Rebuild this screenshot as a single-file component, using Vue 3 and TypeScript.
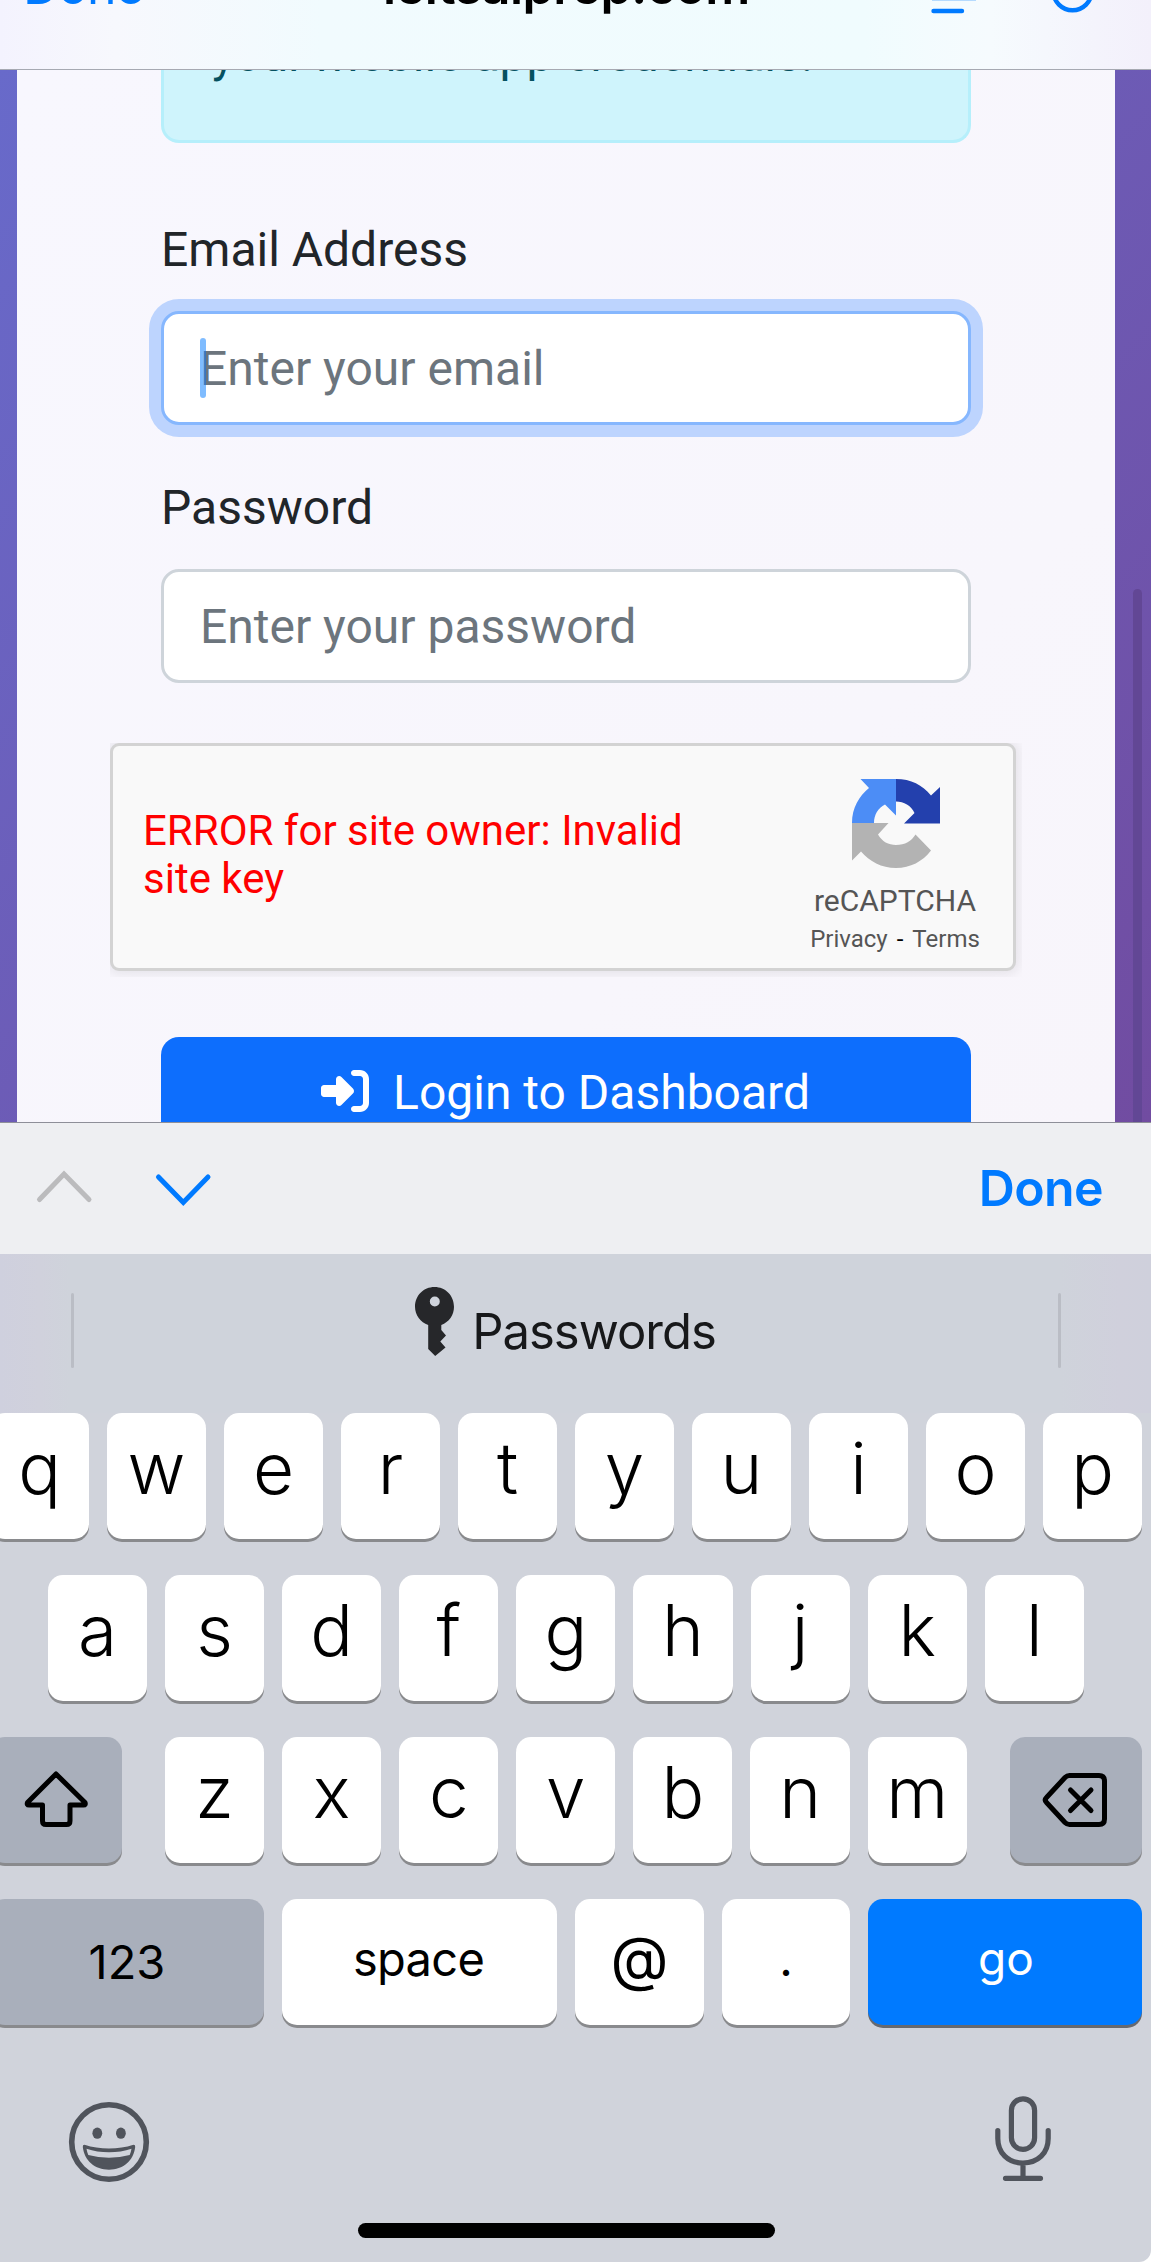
<script setup lang="ts">
interface Key {
  label: string
  kind?: string
}

const rowOne: Key[] = 'qwertyuiop'.split('').map((label) => ({ label }))
const rowTwo: Key[] = 'asdfghjkl'.split('').map((label) => ({ label }))
const rowThree: Key[] = 'zxcvbnm'.split('').map((label) => ({ label }))
const rowFour: Key[] = [
  { label: '123', kind: 'numbers' },
  { label: 'space', kind: 'space' },
  { label: '@', kind: 'at' },
  { label: '.', kind: 'dot' },
  { label: 'go', kind: 'go' },
]
</script>

<template>
  <div class="screen">
    <header class="browser-bar">
      <span class="bar-done">Done</span>
      <span class="bar-title">ieltsaiprep.com</span>
      <svg class="bar-icons" width="170" height="20" viewBox="0 0 170 20">
        <path d="M7 0.2H51" stroke="#007aff" stroke-opacity=".35" stroke-width="1.2" />
        <path d="M8.500 11H37" stroke="#007aff" stroke-width="4.400" stroke-linecap="round" />
        <circle cx="147.500" cy="-9" r="19.200" fill="none" stroke="#007aff" stroke-width="4.400" />
      </svg>
    </header>

    <main class="page">
      <div class="card">
        <div class="alert"><p>your mobile app credentials.</p></div>
        <label class="field-label">Email Address</label>
        <div class="field focused">Enter your email<i class="caret"></i></div>
        <label class="field-label">Password</label>
        <div class="field">Enter your password</div>

        <div class="captcha-frame">
          <div class="captcha">
            <p class="captcha-error">ERROR for site owner: Invalid site key</p>
            <div class="captcha-brand">
              <svg class="captcha-logo" width="92" height="94" viewBox="0 0 92 94">
                <path d="M46 2H10.500L19 11C9 19 2 31 2 46H24C24 38 28 31 35 27.500L46 38.500Z" fill="#4c8df6" />
                <path d="M46 2C61 2 72.500 8 81 18.500L90 10V46.500H54L64.500 36C61 28.500 54 24.500 46 24.500Z" fill="#2340ad" />
                <path d="M2 46H38.500L28 57.500C32 64.500 38.500 68 46 68C55 68 61.500 64 65.500 57.500L81 73.500C72.500 84.500 60.500 91 46 91C31.500 91 19.500 84.500 11 74.500L2 83.500Z" fill="#b3b3b3" />
              </svg>
              <span class="captcha-name">reCAPTCHA</span>
              <span class="captcha-links"><a>Privacy</a><b>-</b><a>Terms</a></span>
            </div>
          </div>
        </div>

        <div class="login">
          <svg width="48" height="48" viewBox="0 0 512 512" fill="#fff">
            <path d="M217.900 105.900L340.700 228.700c7.200 7.200 11.300 17.100 11.300 27.300s-4.100 20.100-11.300 27.300L217.900 406.100c-6.400 6.400-15 9.900-24 9.900c-18.700 0-33.900-15.200-33.900-33.900l0-62.100L32 320c-17.700 0-32-14.300-32-32l0-64c0-17.700 14.300-32 32-32l128 0 0-62.100c0-18.700 15.200-33.900 33.900-33.900c9 0 17.600 3.600 24 9.900zM352 416l64 0c17.700 0 32-14.300 32-32l0-256c0-17.700-14.300-32-32-32l-64 0c-17.700 0-32-14.300-32-32s14.300-32 32-32l64 0c53 0 96 43 96 96l0 256c0 53-43 96-96 96l-64 0c-17.700 0-32-14.300-32-32s14.300-32 32-32z" />
          </svg>
          <span>Login to Dashboard</span>
        </div>
      </div>
      <i class="scrollbar"></i>
    </main>

    <div class="form-bar">
      <svg width="220" height="131" viewBox="0 0 220 131" fill="none" stroke-width="5" stroke-linecap="round" stroke-linejoin="miter">
        <path d="M39.500 76.500L64 51L89 76.500" stroke="#bbbbbd" />
        <path d="M158.500 54L183.300 79.500L208 54" stroke="#007aff" />
      </svg>
      <span class="form-done">Done</span>
    </div>

    <section class="keyboard">
      <div class="suggestions">
        <i class="divider"></i>
        <div class="suggestion">
          <svg width="40" height="70" viewBox="0 0 40 70">
            <path fill="#26272a" fill-rule="evenodd" d="M19.500 0C8.500 0 0 8.600 0 19.700C0 28 5.500 35.200 13.200 38V62L20.200 69L30.500 60.500L25.300 54.500L31 48.500L26.300 43V38C34 35 39 28 39 19.700C39 8.600 30.500 0 19.500 0ZM19.800 9.500A5 5 0 0 1 19.800 19.500A5 5 0 0 1 19.800 9.500Z" />
          </svg>
          <span>Passwords</span>
        </div>
        <i class="divider"></i>
      </div>

      <div class="row row-one">
        <span v-for="k in rowOne" :key="k.label" class="key">{{ k.label }}</span>
      </div>
      <div class="row row-two">
        <span v-for="k in rowTwo" :key="k.label" class="key">{{ k.label }}</span>
      </div>
      <div class="row row-three">
        <span class="key dark">
          <svg width="66" height="58" viewBox="0 0 66 58" fill="none" stroke="#000" stroke-width="5" stroke-linejoin="round">
            <path d="M33 4L4.500 32.500Q3.500 35 6 35H19.500V51Q19.500 54.500 23 54.500H43.500Q47 54.500 47 51V35H60.500Q63 35 62 32.500Z" />
          </svg>
        </span>
        <div class="letters">
          <span v-for="k in rowThree" :key="k.label" class="key">{{ k.label }}</span>
        </div>
        <span class="key dark backspace">
          <svg width="66" height="56" viewBox="0 0 66 56" fill="none" stroke="#000" stroke-width="5" stroke-linejoin="round" stroke-linecap="round">
            <path d="M27.500 3.500H57Q62.500 3.500 62.500 9V47Q62.500 52.500 57 52.500H27.500Q25 52.500 23 50.500L4.500 30.500Q2 28 4.500 25.500L23 5.500Q25 3.500 27.500 3.500Z" />
            <path d="M28.500 18L49 38.500M49 18L28.500 38.500" />
          </svg>
        </span>
      </div>
      <div class="row row-four">
        <span v-for="k in rowFour" :key="k.label" class="key" :class="k.kind">{{ k.label }}</span>
      </div>

      <div class="system-row">
        <svg width="82" height="82" viewBox="0 0 82 82">
          <circle cx="41" cy="41" r="37.300" fill="none" stroke="#50545c" stroke-width="5.600" />
          <ellipse cx="29.300" cy="32.200" rx="4.900" ry="5.600" fill="#50545c" />
          <ellipse cx="52.900" cy="32.200" rx="4.900" ry="5.600" fill="#50545c" />
          <path fill="#50545c" fill-rule="evenodd" d="M16.500 43.700Q28 47.500 41 47.500Q54 47.500 65.500 43.700Q67.500 43.700 67.200 46C65.500 60 55 68.700 41 68.700C27 68.700 16.500 60 14.800 46Q14.500 43.700 16.500 43.700ZM18.500 47.800Q19 51 20.300 54Q30 56.700 41 56.700Q52 56.700 61.700 54Q63 51 63.500 47.800Q53 51.300 41 51.300Q29 51.300 18.500 47.800Z" />
        </svg>
        <svg width="58" height="88" viewBox="0 0 58 88" fill="none" stroke="#50545c" stroke-width="5.200" stroke-linecap="round">
          <rect x="17.400" y="4.800" width="23.200" height="50.600" rx="11.600" />
          <path d="M3.800 36.500V44.500C3.800 59 14 69 29 69C44 69 54.200 59 54.200 44.500V36.500M29 69V84M11.500 84.300H46.500" />
        </svg>
      </div>
      <div class="home-bar"></div>
    </section>
  </div>
</template>

<style>
body {
  background: #fff;
}
</style>

<style scoped>
.screen {
  width: 1151px;
  height: 2262px;
  overflow: hidden;
  display: flex;
  flex-direction: column;
  border-bottom-right-radius: 12px;
  font-family: Inter, "Liberation Sans", sans-serif;
}
.browser-bar {
  box-sizing: border-box;
  flex: none;
  height: 70px;
  overflow: hidden;
  display: flex;
  align-items: flex-start;
  border-bottom: 1px solid #a6a9b2;
  background: linear-gradient(90deg, #f4f3fe 0%, #f7f8fd 10%, #f1fbfe 28%, #f0fcfe 75%, #f6fbfe 86%, #f3f0fb 100%);
  font-size: 50px;
  line-height: 60px;
}
.bar-done {
  width: 360px;
  margin: -44px 0 0 23px;
  color: #007aff;
  letter-spacing: -1px;
}
.bar-title {
  width: 542px;
  margin-top: -44px;
  font-weight: 600;
  letter-spacing: -0.500px;
}
.bar-icons {
  flex: none;
}
.page {
  flex: none;
  height: 1052px;
  overflow: hidden;
  display: flex;
  background: linear-gradient(135deg, #686aca, #714ca1);
  font-family: Roboto, "Liberation Sans", sans-serif;
}
.card {
  box-sizing: border-box;
  flex: none;
  width: 1098px;
  margin-left: 17px;
  padding: 0 144px;
  background: linear-gradient(135deg, #f8f7fe, #f8f6fc 70%, #f8f5fb);
  font-size: 48px;
  line-height: 72px;
}
.alert {
  box-sizing: border-box;
  height: 73px;
  margin-bottom: 71px;
  padding: 0 48px;
  overflow: hidden;
  border: 3px solid #b6effb;
  border-top: 0;
  border-radius: 0 0 18px 18px;
  background: #cff4fc;
  color: #055160;
}
.alert p {
  margin: -51px 0 0;
  white-space: nowrap;
}
.field-label {
  display: block;
  color: #212529;
}
.field {
  position: relative;
  box-sizing: border-box;
  height: 114px;
  margin: 25px 0 47px;
  padding: 19px 36px 17px;
  border: 3px solid #ced4da;
  border-radius: 18px;
  background: #fff;
  color: #6c757d;
}
.focused {
  border-color: #86b7fe;
  box-shadow: 0 0 0 12px #bdd4fe;
}
.caret {
  position: absolute;
  left: 36px;
  top: 24px;
  width: 6px;
  height: 60px;
  border-radius: 3px;
  background: rgba(0, 122, 255, 0.5);
}
.captcha-frame {
  width: 912px;
  height: 234px;
  margin: 60px 0 60px -51px;
  overflow: hidden;
}
.captcha {
  box-sizing: border-box;
  width: 906px;
  height: 228px;
  display: flex;
  justify-content: space-between;
  border: 3px solid #d3d3d3;
  border-radius: 9px;
  background: #f9f9f9;
  box-shadow: 0 0 12px 3px rgba(0, 0, 0, 0.08);
}
.captcha-error {
  width: 560px;
  margin: 61px 0 0 30px;
  color: #f00;
  font-size: 42px;
  line-height: 48px;
}
.captcha-brand {
  width: 236px;
  display: flex;
  flex-direction: column;
  align-items: center;
}
.captcha-logo {
  flex: none;
  margin: 31px 0 0 1px;
}
.captcha-name {
  margin-top: 9px;
  color: #555;
  font-size: 30px;
  line-height: 42px;
}
.captcha-links {
  display: flex;
  gap: 9px;
  margin-top: -1px;
  color: #555;
  font-size: 24px;
  line-height: 36px;
}
.captcha-links b {
  color: #000;
  font-weight: 400;
}
.login {
  box-sizing: border-box;
  display: flex;
  justify-content: center;
  height: 120px;
  padding: 20px 1px 0 0;
  gap: 24px;
  border-radius: 18px;
  background: #0d6efd;
  color: #fff;
}
.login svg {
  margin-top: 10px;
}
.scrollbar {
  width: 9px;
  height: 600px;
  margin: 519px 0 0 18px;
  border-radius: 5px;
  background: #624795;
}
.form-bar {
  box-sizing: border-box;
  flex: none;
  height: 132px;
  display: flex;
  justify-content: space-between;
  border-top: 1px solid #8e8f99;
  background: #eeeff2;
}
.form-done {
  margin-right: 48px;
  color: #007aff;
  font-size: 50px;
  font-weight: 600;
  line-height: 130px;
  letter-spacing: -0.600px;
}
.keyboard {
  flex: 1;
  background: #d0d3db;
}
.suggestions {
  height: 159px;
  display: flex;
  justify-content: space-between;
  padding: 0 90px 0 71px;
  background: linear-gradient(90deg, #cfd0de 0, #d0d1dc 40px, #cfd3db 70px, #cfd3db 1060px, #d0d0dc 1120px, #cfd0dc 1151px);
}
.divider {
  width: 3px;
  height: 75px;
  margin-top: 39px;
  border-radius: 2px;
  background: #babdc5;
}
.suggestion {
  display: flex;
  gap: 17px;
  padding-right: 1px;
  color: #17181a;
  font-size: 49px;
  line-height: 155px;
  letter-spacing: -1px;
}
.suggestion svg {
  margin-top: 33px;
}
.row {
  display: flex;
  gap: 18px;
  height: 126px;
  margin-bottom: 36px;
}
.row-one {
  margin-left: -10px;
}
.row-two {
  margin-left: 48px;
}
.row-three {
  gap: 43px;
  margin-left: -10px;
}
.row-four {
  margin-left: -10px;
}
.letters {
  display: flex;
  gap: 18px;
}
.key {
  flex: none;
  width: 99.100px;
  height: 126px;
  border-radius: 15px;
  background: #fff;
  box-shadow: 0 3px 0 #898a8d;
  color: #000;
  font-size: 71px;
  font-weight: 350;
  line-height: 110px;
  text-align: center;
}
.row-one .key {
  width: 99px;
}
.row-three .dark {
  width: 132px;
  background: #a9afbb;
}
.dark svg {
  display: block;
  margin: 33px 0 0 32.500px;
}
.backspace svg {
  margin: 35px 0 0 32.500px;
}
.row-four .key {
  width: 274px;
  font-size: 47px;
  font-weight: 400;
  line-height: 119px;
}
.row-four .numbers {
  background: #a9afbb;
  line-height: 126px;
}
.row-four .space {
  box-sizing: border-box;
  width: 275px;
  padding-right: 2px;
  letter-spacing: -0.700px;
}
.row-four .at {
  width: 129px;
  font-size: 60px;
  line-height: 119px;
}
.row-four .dot {
  width: 128px;
}
.row-four .go {
  box-sizing: border-box;
  padding-left: 2px;
  background: #007aff;
  box-shadow: 0 3px 0 #66696f;
  color: #fff;
  font-size: 46px;
}
.system-row {
  display: flex;
  justify-content: space-between;
  height: 162px;
  padding: 39px 99px 0 67.500px;
  box-sizing: border-box;
}
.system-row svg:first-child {
  margin-top: 0.700px;
}
.system-row svg:last-child {
  margin-top: -6px;
}
.home-bar {
  width: 417px;
  height: 15px;
  margin-left: 358px;
  border-radius: 8px;
  background: #000;
}
</style>
